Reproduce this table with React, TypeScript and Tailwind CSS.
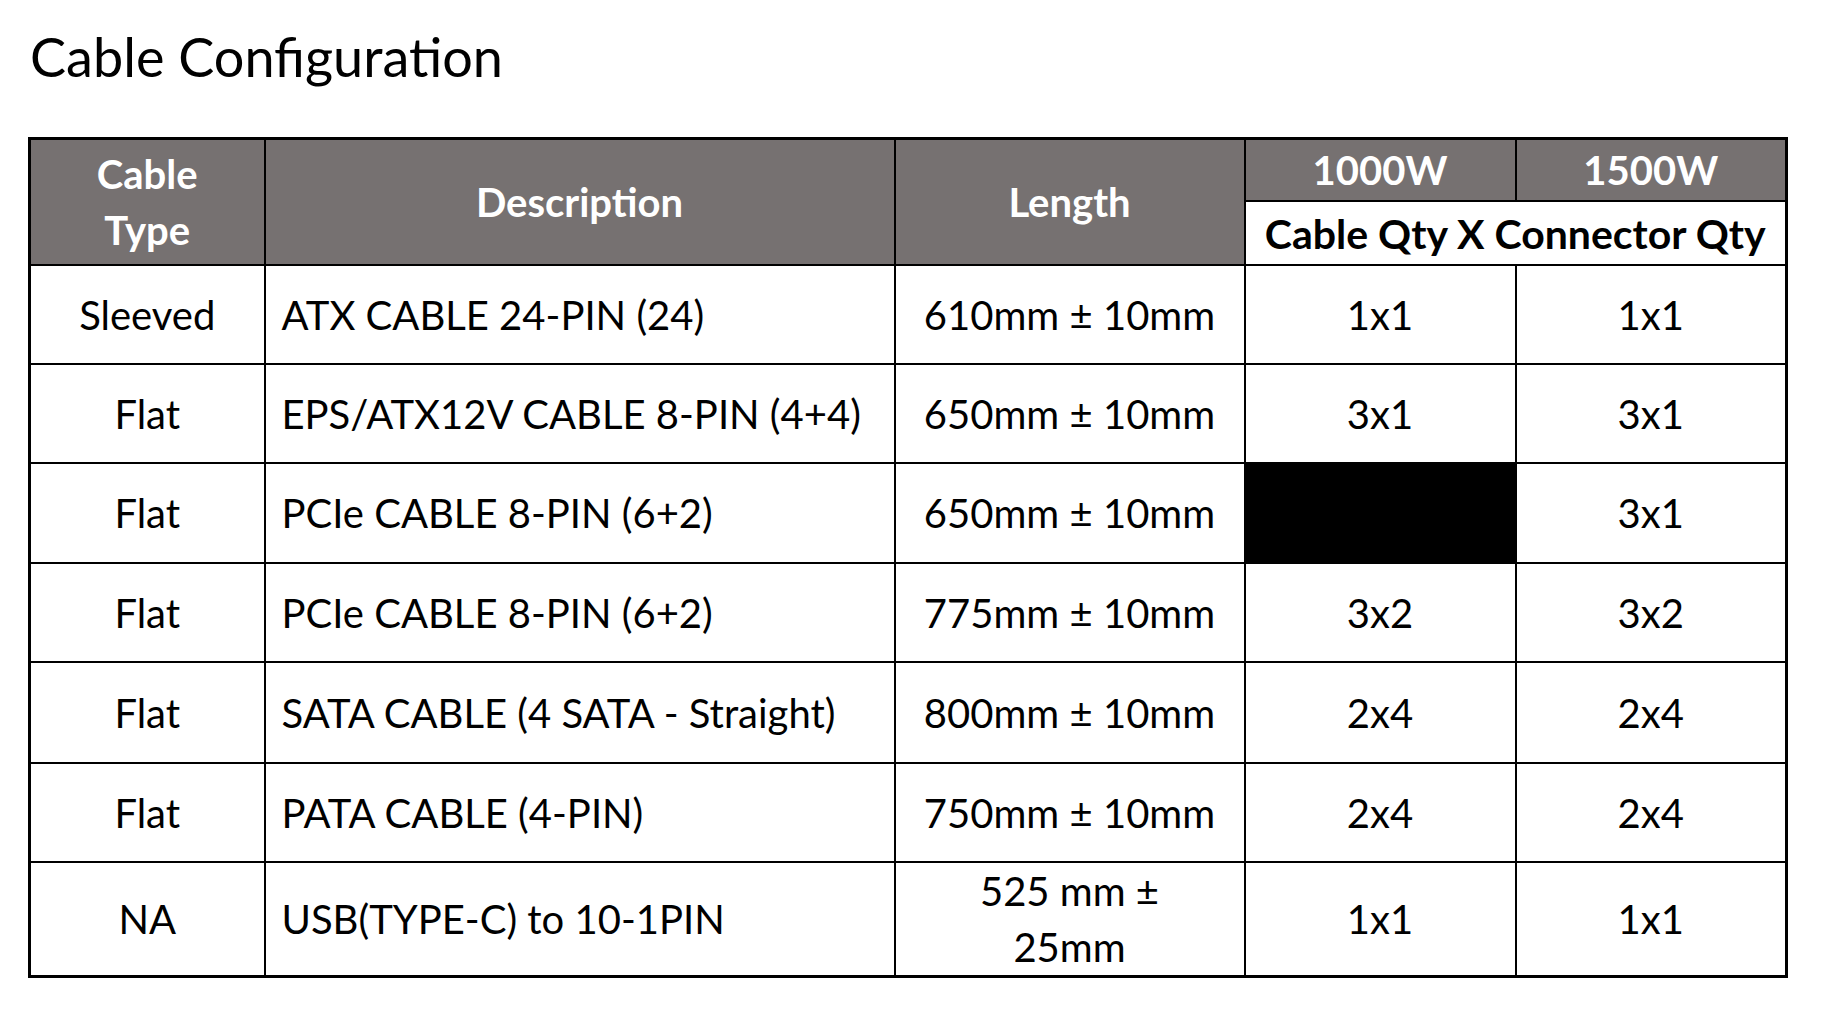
const rows = [
  { type: "Sleeved", desc: "ATX CABLE 24-PIN (24)", length: "610mm ± 10mm", a: "1x1", b: "1x1", h: "h-[99px]" },
  { type: "Flat", desc: "EPS/ATX12V CABLE 8-PIN (4+4)", length: "650mm ± 10mm", a: "3x1", b: "3x1", h: "h-[99px]" },
  { type: "Flat", desc: "PCIe CABLE 8-PIN (6+2)", length: "650mm ± 10mm", a: null, b: "3x1", h: "h-[100px]" },
  { type: "Flat", desc: "PCIe CABLE 8-PIN (6+2)", length: "775mm ± 10mm", a: "3x2", b: "3x2", h: "h-[99px]" },
  { type: "Flat", desc: "SATA CABLE (4 SATA - Straight)", length: "800mm ± 10mm", a: "2x4", b: "2x4", h: "h-[101px]" },
  { type: "Flat", desc: "PATA CABLE (4-PIN)", length: "750mm ± 10mm", a: "2x4", b: "2x4", h: "h-[99px]" },
];

const cell = "border-2 border-black text-center align-middle";

export default function App() {
  return (
    <div className="min-h-screen bg-white font-['Lato',sans-serif] text-black">
      <div className="pt-[25px] pl-[30px]">
        <h1 className="text-[54px] leading-[1.2] font-normal">Cable Configuration</h1>
      </div>

      <table className="mt-[47px] ml-[28px] w-[1757px] table-fixed border-collapse border-[3px] border-black text-[40px]">
        <colgroup>
          <col className="w-[235px]" />
          <col className="w-[630px]" />
          <col className="w-[350px]" />
          <col className="w-[271px]" />
          <col className="w-[271px]" />
        </colgroup>
        <thead className="font-bold">
          <tr className="h-[63px]">
            <th rowSpan={2} className={`${cell} bg-[#767171] text-white font-bold leading-[56px]`}>
              Cable
              <br />
              Type
            </th>
            <th rowSpan={2} className={`${cell} bg-[#767171] text-white font-bold`}>
              Description
            </th>
            <th rowSpan={2} className={`${cell} bg-[#767171] text-white font-bold`}>
              Length
            </th>
            <th className={`${cell} bg-[#767171] text-white font-bold leading-none`}>1000W</th>
            <th className={`${cell} bg-[#767171] text-white font-bold leading-none`}>1500W</th>
          </tr>
          <tr className="h-[64px]">
            <th colSpan={2} className={`${cell} bg-white font-bold leading-none text-[41px]`}>
              Cable Qty X Connector Qty
            </th>
          </tr>
        </thead>
        <tbody>
          {rows.map((r, i) => (
            <tr key={i} className={r.h}>
              <td className={cell}>{r.type}</td>
              <td className="border-2 border-black pl-[16px] text-left align-middle">{r.desc}</td>
              <td className={cell}>{r.length}</td>
              {r.a ? <td className={cell}>{r.a}</td> : <td className={`${cell} bg-black`} />}
              <td className={cell}>{r.b}</td>
            </tr>
          ))}
          <tr className="h-[112px]">
            <td className={cell}>NA</td>
            <td className="border-2 border-black pl-[16px] text-left align-middle">USB(TYPE-C) to 10-1PIN</td>
            <td className={`${cell} leading-[56px]`}>
              525 mm ±
              <br />
              25mm
            </td>
            <td className={cell}>1x1</td>
            <td className={cell}>1x1</td>
          </tr>
        </tbody>
      </table>
    </div>
  );
}
